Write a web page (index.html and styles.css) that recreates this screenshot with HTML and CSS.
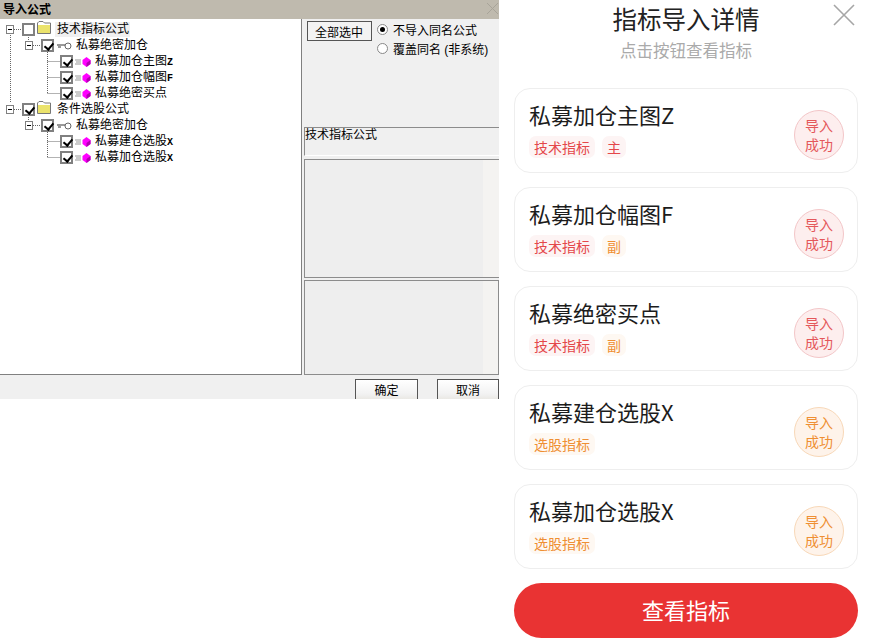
FILE: index.html
```html
<!DOCTYPE html>
<html lang="zh">
<head>
<meta charset="utf-8">
<title>导入公式</title>
<link rel="stylesheet" href="styles.css">
</head>
<body>
<div class="page">
  <section class="dialog">
    <header class="titlebar">
      <span class="title-text">导入公式</span>
      <svg class="dlg-close" width="13" height="13" viewBox="0 0 13 13"><path d="M1 1l11 11M12 1L1 12" stroke="#a8a499" fill="none"/></svg>
    </header>
    <div class="dlg-main">
      <div class="tree">
        <svg class="tree-lines" width="100" height="160" viewBox="0 0 100 160">
          <path d="M10.500 13V83M14 9.500H22M14 89.500H22M28.500 17V20M33 25.500H41M47.500 32V73M47.500 41.500H60M47.500 57.500H60M47.500 73.500H60M28.500 97V101M33 105.500H41M47.500 112V137M47.500 121.500H60M47.500 137.500H60" stroke="#666" stroke-dasharray="1 1" fill="none"/>
        </svg>
        <div class="row lv0">
          <span class="exp"></span><span class="chk"></span>
          <svg class="ic-folder" width="14" height="13" viewBox="0 0 14 13"><path d="M.5 12.500V2L2 .5h4L7.500 2h6v10.500z" fill="#fff" stroke="#777"/><path d="M1 4h12v8H1z" fill="#ebe36c"/></svg>
          <span class="lbl sel">技术指标公式</span>
        </div>
        <div class="row lv1">
          <span class="exp"></span><span class="chk on"></span>
          <svg class="ic-key" width="15" height="8" viewBox="0 0 15 8"><circle cx="11" cy="4" r="3" fill="#fff" stroke="#666"/><path d="M0 3h8M1 5h3" stroke="#333" fill="none"/></svg>
          <span class="lbl">私募绝密加仓</span>
        </div>
        <div class="row lv2"><span class="chk on"></span><svg class="ic-gem" width="16" height="10" viewBox="0 0 16 10"><path d="M0 3h6M1 5h5M0 7h6" stroke="#999" fill="none"/><path d="M11.500 0L15.500 3V7L11.500 10L7.500 7V3z" fill="#f0f"/><path d="M11.500 10L15.500 7V3L11.500 6z" fill="#b000b0"/></svg><span class="lbl">私募加仓主图<span class="lat">Z</span></span></div>
        <div class="row lv2"><span class="chk on"></span><svg class="ic-gem" width="16" height="10" viewBox="0 0 16 10"><path d="M0 3h6M1 5h5M0 7h6" stroke="#999" fill="none"/><path d="M11.500 0L15.500 3V7L11.500 10L7.500 7V3z" fill="#f0f"/><path d="M11.500 10L15.500 7V3L11.500 6z" fill="#b000b0"/></svg><span class="lbl">私募加仓幅图<span class="lat">F</span></span></div>
        <div class="row lv2"><span class="chk on"></span><svg class="ic-gem" width="16" height="10" viewBox="0 0 16 10"><path d="M0 3h6M1 5h5M0 7h6" stroke="#999" fill="none"/><path d="M11.500 0L15.500 3V7L11.500 10L7.500 7V3z" fill="#f0f"/><path d="M11.500 10L15.500 7V3L11.500 6z" fill="#b000b0"/></svg><span class="lbl">私募绝密买点</span></div>
        <div class="row lv0">
          <span class="exp"></span><span class="chk on"></span>
          <svg class="ic-folder" width="14" height="13" viewBox="0 0 14 13"><path d="M.5 12.500V2L2 .5h4L7.500 2h6v10.500z" fill="#fff" stroke="#777"/><path d="M1 4h12v8H1z" fill="#ebe36c"/></svg>
          <span class="lbl">条件选股公式</span>
        </div>
        <div class="row lv1">
          <span class="exp"></span><span class="chk on"></span>
          <svg class="ic-key" width="15" height="8" viewBox="0 0 15 8"><circle cx="11" cy="4" r="3" fill="#fff" stroke="#666"/><path d="M0 3h8M1 5h3" stroke="#333" fill="none"/></svg>
          <span class="lbl">私募绝密加仓</span>
        </div>
        <div class="row lv2"><span class="chk on"></span><svg class="ic-gem" width="16" height="10" viewBox="0 0 16 10"><path d="M0 3h6M1 5h5M0 7h6" stroke="#999" fill="none"/><path d="M11.500 0L15.500 3V7L11.500 10L7.500 7V3z" fill="#f0f"/><path d="M11.500 10L15.500 7V3L11.500 6z" fill="#b000b0"/></svg><span class="lbl">私募建仓选股<span class="lat">X</span></span></div>
        <div class="row lv2"><span class="chk on"></span><svg class="ic-gem" width="16" height="10" viewBox="0 0 16 10"><path d="M0 3h6M1 5h5M0 7h6" stroke="#999" fill="none"/><path d="M11.500 0L15.500 3V7L11.500 10L7.500 7V3z" fill="#f0f"/><path d="M11.500 10L15.500 7V3L11.500 6z" fill="#b000b0"/></svg><span class="lbl">私募加仓选股<span class="lat">X</span></span></div>
      </div>
      <div class="side">
        <div class="opts">
          <button class="btn-all">全部选中</button>
          <div class="radios">
            <div class="radio-row"><span class="radio on"></span>不导入同名公式</div>
            <div class="radio-row"><span class="radio"></span>覆盖同名 (非系统)</div>
          </div>
        </div>
        <div class="name-box">技术指标公式</div>
        <div class="box box-a"></div>
        <div class="box box-b"></div>
      </div>
    </div>
    <footer class="dlg-foot">
      <button class="btn-foot">确定</button>
      <button class="btn-foot">取消</button>
    </footer>
  </section>
  <section class="panel">
    <svg class="close" width="24" height="24" viewBox="0 0 24 24"><path d="M2 2l20 20M22 2L2 22" stroke="#a6a6a6" stroke-width="1.600" fill="none"/></svg>
    <h1 class="panel-title">指标导入详情</h1>
    <p class="panel-sub">点击按钮查看指标</p>
    <div class="cards">
      <article class="card red">
        <div class="info"><h2>私募加仓主图Z</h2><div class="tags"><span class="tag">技术指标</span><span class="tag">主</span></div></div>
        <div class="stamp">导入<br>成功</div>
      </article>
      <article class="card red">
        <div class="info"><h2>私募加仓幅图F</h2><div class="tags"><span class="tag">技术指标</span><span class="tag alt">副</span></div></div>
        <div class="stamp">导入<br>成功</div>
      </article>
      <article class="card red">
        <div class="info"><h2>私募绝密买点</h2><div class="tags"><span class="tag">技术指标</span><span class="tag alt">副</span></div></div>
        <div class="stamp">导入<br>成功</div>
      </article>
      <article class="card orange">
        <div class="info"><h2>私募建仓选股X</h2><div class="tags"><span class="tag">选股指标</span></div></div>
        <div class="stamp">导入<br>成功</div>
      </article>
      <article class="card orange">
        <div class="info"><h2>私募加仓选股X</h2><div class="tags"><span class="tag">选股指标</span></div></div>
        <div class="stamp">导入<br>成功</div>
      </article>
    </div>
    <button class="view-btn">查看指标</button>
  </section>
</div>
</body>
</html>
```
FILE: styles.css
```css
* { box-sizing: border-box; }
html, body { margin: 0; padding: 0; background: #fff; }
body { font-family: "Liberation Sans", "Noto Sans CJK SC", sans-serif; overflow: hidden; }
.page { display: flex; width: 876px; height: 643px; align-items: flex-start; }

.dialog { width: 499px; height: 399px; flex: none; display: flex; flex-direction: column; background: #f0f0f0; font-size: 12px; color: #000; overflow: hidden; }
.titlebar { height: 19px; flex: none; background: #bfbaae; display: flex; align-items: center; justify-content: space-between; padding: 0 0 0 3px; }
.title-text { font-weight: 700; font-size: 12px; line-height: 16px; }
.dlg-close { margin-top: -2px; }
.dlg-main { height: 356px; flex: none; display: flex; }
.tree { position: relative; width: 302px; flex: none; background: #fff; border-right: 1px solid #808080; border-bottom: 1px solid #808080; padding-top: 3px; }
.tree-lines { position: absolute; left: 0; top: 1px; }
.row { position: relative; height: 16px; display: flex; align-items: center; }
.lv0 { padding-left: 6px; }
.lv1 { padding-left: 25px; }
.lv2 { padding-left: 60px; }
.exp { width: 8px; height: 9px; flex: none; border: 1px solid #808080; background: linear-gradient(#000, #000) center / 4px 1px no-repeat #fff; margin: 0 8px 1px 0; }
.chk { width: 13px; height: 13px; flex: none; border: 2px solid #808080; background: #fff; position: relative; margin-bottom: 1px; }
.chk.on::after { content: ""; position: absolute; left: 2.500px; top: 0; width: 4px; height: 7px; border: solid #000; border-width: 0 2px 2px 0; transform: rotate(40deg); }
.lbl { height: 15px; line-height: 15px; white-space: nowrap; padding: 0 1px; margin-bottom: 1px; }
.lbl.sel { background: #f0f0f0; }
.lat { font-family: "Liberation Mono", monospace; font-size: 10px; font-weight: 700; }
.ic-folder { flex: none; margin: 0 4px 5px 2px; }
.lv0 .lbl { padding-left: 2px; }
.ic-key { flex: none; margin: 0 3px 1px 3px; }
.ic-gem { flex: none; margin: 0 3px 1px 2px; }

.side { flex: 1; min-width: 0; display: flex; flex-direction: column; padding-left: 2px; }
.opts { height: 108px; flex: none; display: flex; padding: 1px 0 0 3px; }
.btn-all { width: 65px; height: 20px; margin-top: 1px; padding: 0 1px 0 0; font: inherit; color: #000; background: #f3f3f3; border: 1px solid #555; }
.radios { margin-left: 5px; }
.radio-row { display: flex; align-items: center; height: 19px; white-space: nowrap; gap: 4px; font-size: 12px; }
.radio { width: 11px; height: 11px; flex: none; border-radius: 50%; background: #fff; border: 1px solid #888; position: relative; margin-right: 1px; }
.radio.on::after { content: ""; position: absolute; left: 2px; top: 2px; width: 5px; height: 5px; border-radius: 50%; background: #000; }
.name-box { height: 29px; flex: none; border: solid #8c8c8c; border-width: 1px 0 1px 1px; border-bottom-color: #fff; line-height: 14px; font-size: 12px; white-space: nowrap; }
.box { flex: none; border: 1px solid #8c8c8c; background: linear-gradient(90deg, #eee 0, #eee 92%, #f4f3f1 92%); }
.box-a { height: 119px; margin-top: 3px; border-right: 0; }
.box-b { height: 95px; margin-top: 2px; }

.dlg-foot { flex: 1; display: flex; justify-content: flex-end; gap: 19px; padding-top: 4px; background: #f0f0f0; }
.btn-foot { width: 63px; height: 24px; padding: 0 0 4px; font: inherit; color: #000; background: linear-gradient(#fff, #f2f2f2 60%, #e4e1da); border: 1px solid #555; border-bottom: 0; }
.btn-foot:last-child { width: 62px; }

.panel { position: relative; flex: 1; min-width: 0; height: 643px; padding: 0 18px 0 15px; font-family: "Noto Sans CJK SC", "Liberation Sans", sans-serif; }
.close { position: absolute; right: 20px; top: 3px; }
.panel-title { margin: 0; height: 41px; padding-bottom: 4px; font-size: 24.500px; line-height: 37px; font-weight: 400; text-align: center; color: #222; }
.panel-sub { margin: 0 0 27px; height: 20px; font-size: 16.500px; line-height: 18px; text-align: center; color: #aaa; }
.cards { display: flex; flex-direction: column; gap: 14px; }
.card { height: 85px; border: 1px solid #eeeeee; border-radius: 16px; display: flex; align-items: center; justify-content: space-between; padding: 0 13px 0 14px; }
.info { min-width: 0; margin-top: -5px; }
.info h2 { margin: 0; height: 30px; font-size: 22px; line-height: 30px; font-weight: 400; color: #1c1c1c; white-space: nowrap; }
.tags { display: flex; gap: 7px; margin-top: 7px; }
.tag { height: 22px; padding: 0 5px; border-radius: 7px; font-size: 14px; line-height: 22px; }
.stamp { width: 50px; height: 50px; flex: none; margin-top: 8px; border-radius: 50%; border: 1px solid; font-size: 14px; line-height: 19px; text-align: center; padding-top: 5px; }
.red .tag { background: #fdf4f4; color: #e4474a; }
.red .tag.alt { background: #fef8f2; color: #ef8f33; }
.red .stamp { background: #fdeeee; border-color: #f3c6c8; color: #e4575a; }
.orange .tag { background: #fef8f2; color: #ef8f33; }
.orange .stamp { background: #fef3ea; border-color: #f8d8b8; color: #ef8f33; }
.view-btn { display: block; width: 344px; height: 55px; margin-top: 14px; padding: 0 0 4px; border: 0; border-radius: 28px; background: #e93333; color: #fff; font: inherit; font-size: 22px; }
```
